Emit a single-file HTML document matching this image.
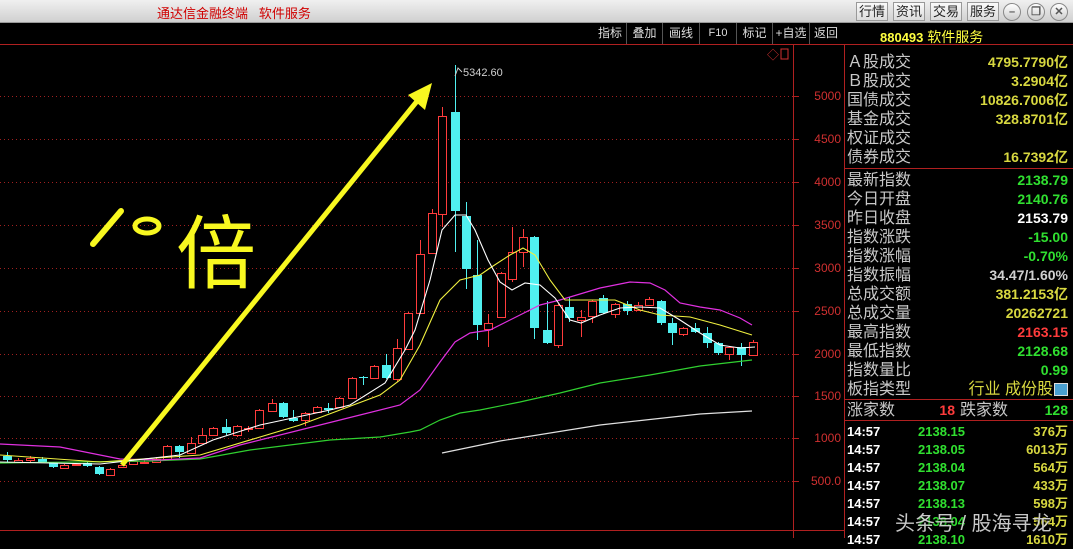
<!DOCTYPE html>
<html><head><meta charset="utf-8"><style>
*{margin:0;padding:0;box-sizing:border-box}
body{width:1073px;height:538px;background:#000;position:relative;overflow:hidden;font-family:"Liberation Sans","Noto Sans CJK SC",sans-serif}
.top{position:absolute;left:0;top:0;width:1073px;height:23px;background:linear-gradient(#f0f0f0,#d0d0d0);border-bottom:1px solid #999}
.title{position:absolute;left:157px;top:3px;font-size:13px;color:#d00000}
.btn{position:absolute;top:2px;height:19px;width:32px;border:1px solid #999;background:linear-gradient(#fafafa,#dcdcdc);font-size:13px;color:#222;text-align:center;line-height:17px}
.circ{position:absolute;top:3px;width:18px;height:18px;border-radius:50%;border:1px solid #888;background:linear-gradient(#fff,#ccc);font-size:11px;line-height:16px;text-align:center;color:#555;font-weight:bold}
.tb{position:absolute;top:23px;height:21px;font-size:12px;color:#ddd;line-height:21px;text-align:center}
.sep{position:absolute;top:23px;width:1px;height:21px;background:#555}
.lab{position:absolute;left:847px;font-size:16px;color:#c8c8c8;line-height:19px}
.val{position:absolute;right:5px;font-size:14px;font-weight:bold;line-height:19px;font-family:"Liberation Sans","Noto Sans CJK SC",sans-serif}
.y{color:#d8d840}.g{color:#30e030}.w{color:#fff}.r{color:#ff3c3c}.gr{color:#d0d0d0}
.tk{position:absolute;font-size:13px;font-weight:bold;line-height:18px}
.ax{position:absolute;right:232px;font-size:12px;color:#d03030}
</style></head><body>
<div class="top"><div class="title">通达信金融终端&nbsp;&nbsp;&nbsp;软件服务</div>
<div class="btn" style="left:856px">行情</div><div class="btn" style="left:893px">资讯</div><div class="btn" style="left:930px">交易</div><div class="btn" style="left:967px">服务</div>
<div class="circ" style="left:1003px">–</div><div class="circ" style="left:1027px">❐</div><div class="circ" style="left:1050px">✕</div></div>

<div class="tb" style="left:595px;width:30px">指标</div><div class="sep" style="left:626px"></div>
<div class="tb" style="left:628px;width:33px">叠加</div><div class="sep" style="left:662px"></div>
<div class="tb" style="left:664px;width:34px">画线</div><div class="sep" style="left:699px"></div>
<div class="tb" style="left:700px;width:36px;font-size:11px">F10</div><div class="sep" style="left:736px"></div>
<div class="tb" style="left:737px;width:35px">标记</div><div class="sep" style="left:772px"></div>
<div class="tb" style="left:773px;width:36px">+自选</div><div class="sep" style="left:809px"></div>
<div class="tb" style="left:810px;width:32px">返回</div>
<div style="position:absolute;left:880px;top:27px;font-size:14px;color:#ffff40"><b style="font-size:13px">880493</b> 软件服务</div>

<svg width="1073" height="538" style="position:absolute;left:0;top:0" id="s">
<line x1="0" y1="44.5" x2="844" y2="44.5" stroke="#b02020"/>
<line x1="844.5" y1="44" x2="844.5" y2="538" stroke="#b02020"/>
<line x1="843" y1="44.5" x2="1073" y2="44.5" stroke="#b02020"/>
<line x1="793.5" y1="44" x2="793.5" y2="538" stroke="#b02020"/>
<line x1="0" y1="530.5" x2="844" y2="530.5" stroke="#b02020"/>
<line x1="845" y1="168.5" x2="1073" y2="168.5" stroke="#b02020"/>
<line x1="845" y1="399.5" x2="1073" y2="399.5" stroke="#b02020"/>
<line x1="845" y1="420.5" x2="1073" y2="420.5" stroke="#b02020"/>
<g id="grid"></g><g id="c"></g>
<polyline fill="none" stroke="#e0e0e0" stroke-width="1.2" points="442,453 500,441 600,425 700,414 752,411"/>
<polyline fill="none" stroke="#30d030" stroke-width="1.2" points="0,463 150,461 200,459 250,450 330,440 380,437 410,432 420,430 440,420 460,413 480,410 520,402 560,393 600,383 650,375 700,366 752,360"/>
<polyline fill="none" stroke="#e030e0" stroke-width="1.2" points="0,444 60,447 120,459 160,460 200,458 240,445 300,430 360,415 400,405 420,390 440,362 455,342 470,333 490,330 520,315 540,305 560,300 600,288 630,282 650,283 665,290 680,303 700,307 720,310 740,318 752,325"/>
<polyline fill="none" stroke="#f0f040" stroke-width="1.1" points="0,455 100,462 200,455 300,425 380,395 400,380 420,345 440,300 460,280 480,275 490,268 510,255 523,248 535,255 550,280 565,300 580,300 600,300 615,300 640,310 660,315 690,317 720,325 752,335"/>
<polyline fill="none" stroke="#ffffff" stroke-width="1.1" points="0,462 100,464 180,455 213,440 260,425 330,410 350,405 385,383 405,350 415,330 430,280 442,230 455,215 466,215 475,230 488,260 500,282 512,290 525,283 540,285 555,298 570,320 581,323 600,315 620,308 640,307 660,308 680,320 700,333 720,345 740,348 755,347"/>
<text x="463" y="76" fill="#d0d0d0" font-size="11" font-family="Liberation Sans">5342.60</text>
<polyline points="455,76 458,68 462,72" fill="none" stroke="#ccc"/>
<text x="767" y="59" fill="#d03030" font-size="12">◇</text><rect x="781" y="49" width="7" height="10" fill="none" stroke="#d03030"/>
<line x1="122" y1="465" x2="418" y2="100" stroke="#f8f820" stroke-width="5"/>
<polygon points="432,83 408,95 425,110" fill="#f8f820"/>
<line x1="93" y1="244" x2="121" y2="211" stroke="#f8f820" stroke-width="6" stroke-linecap="round"/>
<ellipse cx="147" cy="226" rx="12" ry="7" fill="none" stroke="#f8f820" stroke-width="5"/>
<text x="176" y="282" fill="#f8f820" font-size="80" font-family="Noto Sans CJK SC,sans-serif">倍</text>
</svg>

<div class="ax" style="top:89px">5000</div><div class="ax" style="top:132px">4500</div><div class="ax" style="top:175px">4000</div><div class="ax" style="top:218px">3500</div><div class="ax" style="top:261px">3000</div><div class="ax" style="top:304px">2500</div><div class="ax" style="top:347px">2000</div><div class="ax" style="top:389px">1500</div><div class="ax" style="top:431px">1000</div><div class="ax" style="top:474px">500.0</div>

<div class="lab" style="top:53px">Ａ股成交</div><div class="val y" style="top:53px">4795.7790亿</div>
<div class="lab" style="top:72px">Ｂ股成交</div><div class="val y" style="top:72px">3.2904亿</div>
<div class="lab" style="top:91px">国债成交</div><div class="val y" style="top:91px">10826.7006亿</div>
<div class="lab" style="top:110px">基金成交</div><div class="val y" style="top:110px">328.8701亿</div>
<div class="lab" style="top:129px">权证成交</div>
<div class="lab" style="top:148px">债券成交</div><div class="val y" style="top:148px">16.7392亿</div>
<div class="lab" style="top:171px">最新指数</div><div class="val g" style="top:171px">2138.79</div>
<div class="lab" style="top:190px">今日开盘</div><div class="val g" style="top:190px">2140.76</div>
<div class="lab" style="top:209px">昨日收盘</div><div class="val w" style="top:209px">2153.79</div>
<div class="lab" style="top:228px">指数涨跌</div><div class="val g" style="top:228px">-15.00</div>
<div class="lab" style="top:247px">指数涨幅</div><div class="val g" style="top:247px">-0.70%</div>
<div class="lab" style="top:266px">指数振幅</div><div class="val gr" style="top:266px">34.47/1.60%</div>
<div class="lab" style="top:285px">总成交额</div><div class="val y" style="top:285px">381.2153亿</div>
<div class="lab" style="top:304px">总成交量</div><div class="val y" style="top:304px">20262721</div>
<div class="lab" style="top:323px">最高指数</div><div class="val r" style="top:323px">2163.15</div>
<div class="lab" style="top:342px">最低指数</div><div class="val g" style="top:342px">2128.68</div>
<div class="lab" style="top:361px">指数量比</div><div class="val g" style="top:361px">0.99</div>
<div class="lab" style="top:380px">板指类型</div><div class="val y" style="top:380px;right:20px;font-weight:normal;font-size:16px">行业 成份股</div>
<div style="position:absolute;left:1054px;top:383px;width:14px;height:13px;background:#4aa0d0;border:1px solid #ddd"></div>
<div class="lab" style="top:401px">涨家数</div><div class="val r" style="top:401px;right:118px">18</div><div class="lab" style="top:401px;left:960px">跌家数</div><div class="val g" style="top:401px">128</div>
<div id="ticks"></div>
<div style="position:absolute;left:895px;top:507px;font-size:20px;color:rgba(235,235,235,0.85);text-shadow:0 0 2px #000">头条号 / 股海寻龙</div>

<script>
var g=document.getElementById('grid'),h='';
[96,139,182,225,268,311,354,396,438,481].forEach(function(y){h+='<line x1="0" y1="'+y+'.5" x2="793" y2="'+y+'.5" stroke="#a02020" stroke-dasharray="1,3"/><line x1="793" y1="'+y+'.5" x2="799" y2="'+y+'.5" stroke="#b02020"/>';});
g.innerHTML=h;
var C=[[7,'c',456,460,452,463],[18,'r',460,462,458,463],[30,'r',458,460,456,462],[42,'c',459,462,457,463],[53,'c',463,467,462,468],[64,'r',465,468,464,469],[76,'r',464,465,463,466],[87,'c',463,466,462,467],[99,'c',467,474,466,475],[110,'r',469,475,468,476],[122,'r',465,467,464,468],[133,'r',461,464,460,465],[144,'r',462,463,460,464],[156,'r',459,462,457,463],[167,'r',446,459,445,460],[179,'c',446,452,445,458],[191,'r',443,453,437,454],[202,'r',435,443,428,444],[213,'r',428,435,427,436],[226,'c',427,433,419,435],[237,'r',426,435,425,437],[248,'r',428,429,426,432],[259,'r',410,428,409,429],[272,'r',403,411,399,412],[283,'c',403,417,402,418],[293,'c',418,421,410,422],[305,'r',413,420,412,426],[317,'r',407,412,406,413],[328,'c',408,410,403,413],[339,'r',398,407,397,408],[352,'r',378,398,377,399],[363,'c',377,378,376,385],[374,'r',366,378,365,379],[386,'c',365,378,354,379],[397,'r',348,379,339,382],[408,'r',313,349,312,350],[420,'r',254,313,240,314],[432,'r',213,253,209,254],[442,'r',116,214,107,227],[455,'c',112,211,65,252],[466,'c',216,269,202,289],[477,'c',275,325,240,340],[488,'r',323,329,314,347],[501,'r',273,317,272,318],[512,'r',252,279,227,282],[523,'r',237,252,229,267],[534,'c',237,328,236,339],[547,'c',330,343,301,344],[558,'r',305,345,304,348],[569,'c',307,318,297,322],[581,'r',317,320,310,337],[592,'r',301,316,300,323],[603,'c',298,313,295,314],[615,'r',304,314,303,318],[627,'c',304,311,301,315],[638,'r',305,310,302,311],[649,'r',299,305,297,306],[661,'c',301,323,300,325],[672,'c',323,333,318,345],[683,'r',328,334,327,336],[695,'c',328,332,323,333],[707,'c',333,343,327,348],[718,'c',343,353,342,355],[729,'r',347,354,346,360],[741,'c',347,355,343,366],[753,'r',342,355,340,356]];
var s='';
C.forEach(function(k){var x=k[0],col=k[1]=='r'?'#ff3c3c':'#50f0f0';
s+='<line x1="'+(x+0.5)+'" y1="'+k[4]+'" x2="'+(x+0.5)+'" y2="'+k[5]+'" stroke="'+col+'"/>';
var hgt=Math.max(1,k[3]-k[2]);
if(k[1]=='r')s+='<rect x="'+(x-3.5)+'" y="'+(k[2]+0.5)+'" width="8" height="'+hgt+'" fill="#000" stroke="'+col+'"/>';
else s+='<rect x="'+(x-4)+'" y="'+k[2]+'" width="9" height="'+hgt+'" fill="'+col+'"/>';});
document.getElementById('c').innerHTML=s;
var T=[['2138.15','376万'],['2138.05','6013万'],['2138.04','564万'],['2138.07','433万'],['2138.13','598万'],['2138.04','564万'],['2138.10','1610万']],t='';
T.forEach(function(r,i){var y=423+i*18;t+='<div class="tk w" style="left:847px;top:'+y+'px">14:57</div><div class="tk g" style="right:108px;top:'+y+'px">'+r[0]+'</div><div class="tk y" style="right:5px;top:'+y+'px">'+r[1]+'</div>';});
document.getElementById('ticks').innerHTML=t;
</script>
</body></html>
